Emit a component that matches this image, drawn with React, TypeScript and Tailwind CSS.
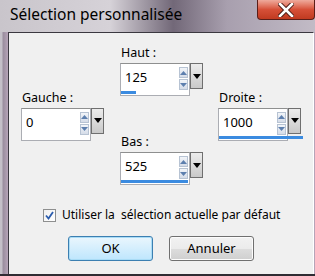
import React from "react";

type SpinProps = {
  label: string;
  value: string;
  bar: string;
};

const SpinField = (props: SpinProps) => {
  const { label, value, bar } = props;
  return (
    <div className="flex flex-col">
      <div className="text-[12.5px] leading-[16px] text-black pl-[1px]">{label}</div>
      <div className="mt-[2px] flex items-start">
        <div className="w-[70px] h-[33px] bg-white border border-[#abadb3] border-t-[#8e8f8f] flex flex-col">
          <div className="flex justify-between items-start">
            <div className="pl-[4px] pt-[5px] text-[13px] leading-[16px] text-black">{value}</div>
            <div className="flex flex-col gap-[1px] pt-[3px] pr-[1px]">
              <div className="w-[9px] h-[11px] bg-gradient-to-b from-[#f2f5f9] to-[#d5dce8] border border-[#b7c3d3] flex items-center justify-center">
                <svg width="7" height="4" viewBox="0 0 7 4">
                  <path d="M0 4 L3.5 0 L7 4 Z" fill="#5d7fae" />
                </svg>
              </div>
              <div className="w-[9px] h-[11px] bg-gradient-to-b from-[#f2f5f9] to-[#d5dce8] border border-[#b7c3d3] flex items-center justify-center">
                <svg width="7" height="4" viewBox="0 0 7 4">
                  <path d="M0 0 L3.5 4 L7 0 Z" fill="#5d7fae" />
                </svg>
              </div>
            </div>
          </div>
          <div className={`mt-auto mb-[1px] h-[3px] bg-[#3b8be0] ${bar}`} />
        </div>
        <div className="w-[13px] h-[26px] bg-gradient-to-b from-[#ececec] to-[#c9c9c9] border border-[#6f6f6f] flex items-center justify-center">
          <svg width="8" height="5" viewBox="0 0 8 5">
            <path d="M0 0 L4 5 L8 0 Z" fill="#000" />
          </svg>
        </div>
      </div>
    </div>
  );
};

const App = () => {
  return (
    <div className="w-[315px] h-[276px] flex flex-col overflow-hidden font-['Noto_Sans',sans-serif] bg-[linear-gradient(to_right,#c9c5cb_0%,#d6d2d8_35%,#726878_55%,#a89fae_72%,#c2bbc6_100%)]">
      <div className="h-[32px] flex justify-between items-start">
        <div className="pl-[10px] pt-[4px] text-[15.5px] leading-[20px] text-black">
          Sélection personnalisée
        </div>
        <div className="w-[58px] h-[20px] rounded-b-[4px] border border-t-0 border-[#5a1e18] bg-gradient-to-b from-[#eeaa9c] via-[#d65038] to-[#c03a20] flex items-center justify-center">
          <svg width="16" height="14" viewBox="0 0 16 14">
            <path d="M2 1 L14 13 M14 1 L2 13" stroke="#4a1a14" strokeWidth="4.5" strokeLinecap="square" />
            <path d="M2 1 L14 13 M14 1 L2 13" stroke="#ffffff" strokeWidth="2.6" strokeLinecap="square" />
          </svg>
        </div>
      </div>
      <div className="flex-1 flex pl-[8px] pr-[1px] bg-[linear-gradient(to_right,#c4c0c8_0px,#c4c0c8_2px,#9a8d9e_3px,#b6a4b8_8px)]">
        <div className="flex-1 bg-[#f0f0f0] border-l border-t border-[#3b3840] border-r border-r-[#ffffff] flex flex-col">
          <div className="flex pt-[12px] pl-[12px]">
            <div className="w-[99px] flex items-center">
              <SpinField label="Gauche :" value="0" bar="w-0" />
            </div>
            <div className="w-[98px] flex flex-col">
              <SpinField label="Haut :" value="125" bar="w-[15px]" />
              <div className="mt-[38px]">
                <SpinField label="Bas :" value="525" bar="w-[67px]" />
              </div>
            </div>
            <div className="flex items-center">
              <SpinField label="Droite :" value="1000" bar="w-[84px]" />
            </div>
          </div>
          <div className="mt-[22px] pl-[34px] flex items-center gap-[6px]">
            <div className="w-[13px] h-[13px] bg-gradient-to-br from-[#f0f0f0] to-[#ffffff] border border-[#8e8f8f] flex items-center justify-center">
              <svg width="9" height="9" viewBox="0 0 9 9">
                <path d="M1 4.5 L3.5 7.5 L8 1" stroke="#2b5cad" strokeWidth="1.8" fill="none" />
              </svg>
            </div>
            <span className="text-[12px] leading-[16px] text-black whitespace-pre">
              Utiliser la  sélection actuelle par défaut
            </span>
          </div>
          <div className="mt-[13px] flex justify-center gap-[16px]">
            <button className="w-[85px] h-[25px] rounded-[3px] border border-[#3c7fb1] bg-gradient-to-b from-[#eaf6fd] to-[#bee6fd] text-[13px] text-black shadow-[inset_0_0_0_1px_#a9dcf6]">
              OK
            </button>
            <button className="w-[85px] h-[25px] rounded-[3px] border border-[#707070] bg-[linear-gradient(to_bottom,#f2f2f2_0%,#ebebeb_50%,#dddddd_51%,#cfcfcf_100%)] text-[13px] text-black shadow-[inset_0_0_0_1px_#fcfcfc]">
              Annuler
            </button>
          </div>
        </div>
      </div>
      <div className="h-[2px] bg-[#2f2c33]" />
    </div>
  );
};

export default App;
